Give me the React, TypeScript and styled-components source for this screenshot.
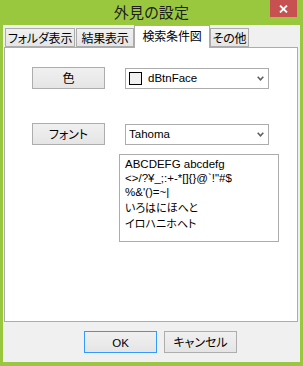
import React from 'react';
import styled, { createGlobalStyle } from 'styled-components';

const GlobalStyle = createGlobalStyle`
  html, body {
    margin: 0;
    padding: 0;
    background: #ffffff;
  }
  * {
    box-sizing: border-box;
  }
`;

const uiFont = `"Noto Sans CJK JP", "Liberation Sans", sans-serif`;
const latinFont = `"Liberation Sans", "Noto Sans CJK JP", sans-serif`;

const Window = styled.div`
  width: 303px;
  height: 366px;
  background: #99c83e;
  padding: 0 3px 4px 3px;
  display: flex;
  flex-direction: column;
  font-family: ${uiFont};
  font-feature-settings: "palt";
`;

const TitleBar = styled.div`
  height: 25px;
  display: grid;
  grid-template-columns: 1fr auto 1fr;
  align-items: start;
`;

const Title = styled.div`
  grid-column: 2;
  font-size: 15px;
  line-height: 24px;
  color: #1e1e1e;
  letter-spacing: 0.2px;
`;

const CloseButton = styled.div`
  grid-column: 3;
  justify-self: end;
  width: 27px;
  height: 17px;
  margin-right: 3px;
  background: #c75050;
  display: flex;
  align-items: center;
  justify-content: center;
`;

const Client = styled.div`
  flex: 1;
  background: #f0f0f0;
  display: flex;
  flex-direction: column;
`;

const TabControl = styled.div`
  margin: 0 2px 0 1px;
  display: flex;
  flex-direction: column;
`;

const TabStrip = styled.div`
  height: 22px;
  display: flex;
  align-items: flex-end;
  padding-left: 1px;
  position: relative;
  z-index: 1;
`;

const Tab = styled.div<{ $width: number; $active?: boolean; $gap?: number }>`
  width: ${({ $width }) => $width}px;
  height: ${({ $active }) => ($active ? 23 : 19)}px;
  margin-right: ${({ $gap }) => $gap ?? 0}px;
  margin-bottom: ${({ $active }) => ($active ? -1 : 0)}px;
  border: 1px solid #acacac;
  border-bottom: ${({ $active }) => ($active ? 'none' : '1px solid #acacac')};
  background: ${({ $active }) =>
    $active ? '#ffffff' : 'linear-gradient(to bottom, #f0f0f0, #e5e5e5)'};
  font-size: 12px;
  letter-spacing: -0.2px;
  line-height: ${({ $active }) => ($active ? 19 : 17)}px;
  color: #000;
  text-align: center;
  white-space: nowrap;
  overflow: hidden;
`;

const Panel = styled.div`
  height: 275px;
  background: #ffffff;
  border: 1px solid #acacac;
  padding: 19px 0 0 27px;
  display: flex;
  flex-direction: column;
`;

const FieldRow = styled.div<{ $after: number }>`
  display: grid;
  grid-template-columns: 73px 160px;
  column-gap: 14px;
  align-items: center;
  margin-bottom: ${({ $after }) => $after}px;
`;

const Button = styled.div<{ $focused?: boolean }>`
  width: 73px;
  height: 22px;
  border: 1px solid ${({ $focused }) => ($focused ? '#3399ff' : '#adadad')};
  background: linear-gradient(to bottom, #f0f0f0, #e5e5e5);
  font-size: 12px;
  line-height: 20px;
  text-align: center;
  color: #000;
`;

const LatinLabel = styled.span`
  font-family: ${latinFont};
  font-size: 11.5px;
`;

const Combo = styled.div`
  margin-left: 6px;
  width: 144px;
  height: 21px;
  border: 1px solid #acacac;
  background: #ffffff;
  display: flex;
  align-items: center;
  padding: 0 4px 0 3px;
  font-family: ${latinFont};
  font-size: 11.5px;
  color: #000;
`;

const Swatch = styled.span<{ $color: string }>`
  width: 13px;
  height: 13px;
  border: 1px solid #000;
  background: ${({ $color }) => $color};
  margin-right: 6px;
  flex-shrink: 0;
`;

const ComboText = styled.span`
  flex: 1;
`;

const Preview = styled.div`
  grid-column: 2;
  height: 88px;
  border: 1px solid #acacac;
  padding: 2px 5px;
  font-family: ${latinFont};
  font-size: 11.5px;
  line-height: 14px;
  color: #000;
  white-space: nowrap;
  overflow: hidden;
`;

const PreviewLine = styled.div`
  height: 14px;
`;

const KanaLine = styled.div`
  font-family: ${uiFont};
  font-size: 11px;
  line-height: 16px;
  height: 16px;
  font-feature-settings: "palt";
`;

const Footer = styled.div`
  display: flex;
  gap: 7px;
  padding: 9px 0 0 81px;
`;

const Chevron = () => (
  <svg width="7" height="5" viewBox="0 0 7 5">
    <polyline points="0.7,0.8 3.5,3.8 6.3,0.8" fill="none" stroke="#606060" strokeWidth="1.6" />
  </svg>
);

const CloseGlyph = () => (
  <svg width="9" height="8" viewBox="0 0 9 8">
    <path d="M1 0.5 L8 7.5 M8 0.5 L1 7.5" stroke="#ffffff" strokeWidth="1.8" />
  </svg>
);

const App: React.FC = () => {
  return (
    <>
      <GlobalStyle />
      <Window>
        <TitleBar>
          <Title>外見の設定</Title>
          <CloseButton>
            <CloseGlyph />
          </CloseButton>
        </TitleBar>
        <Client>
          <TabControl>
            <TabStrip>
              <Tab $width={70} $gap={1}>フォルダ表示</Tab>
              <Tab $width={58}>結果表示</Tab>
              <Tab $width={76} $active>検索条件図</Tab>
              <Tab $width={39}>その他</Tab>
            </TabStrip>
            <Panel>
              <FieldRow $after={34}>
                <Button>色</Button>
                <Combo>
                  <Swatch $color="#f0f0f0" />
                  <ComboText>dBtnFace</ComboText>
                  <Chevron />
                </Combo>
              </FieldRow>
              <FieldRow $after={9}>
                <Button>フォント</Button>
                <Combo>
                  <ComboText>Tahoma</ComboText>
                  <Chevron />
                </Combo>
              </FieldRow>
              <FieldRow $after={0}>
                <Preview>
                  <PreviewLine>ABCDEFG abcdefg</PreviewLine>
                  <PreviewLine>{'<>/?¥_;:+-*[]{}@`!"#$'}</PreviewLine>
                  <PreviewLine>{"%&'()=~|"}</PreviewLine>
                  <KanaLine>いろはにほへと</KanaLine>
                  <KanaLine>イロハニホヘト</KanaLine>
                </Preview>
              </FieldRow>
            </Panel>
          </TabControl>
          <Footer>
            <Button $focused>
              <LatinLabel>OK</LatinLabel>
            </Button>
            <Button>キャンセル</Button>
          </Footer>
        </Client>
      </Window>
    </>
  );
};

export default App;
